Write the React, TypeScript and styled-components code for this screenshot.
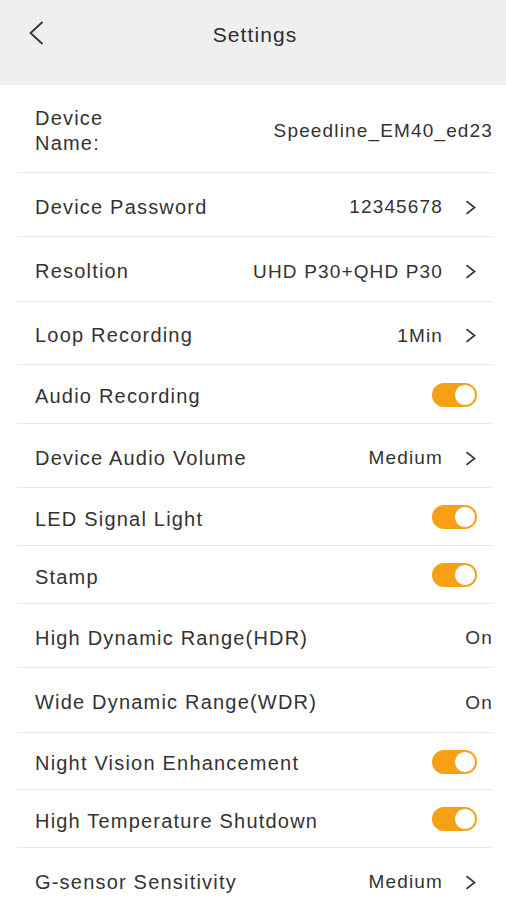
import React from "react";
import styled, { createGlobalStyle } from "styled-components";

const Global = createGlobalStyle`
  html, body { margin: 0; padding: 0; background: #ffffff; }
  body { font-family: "Liberation Sans", Arial, sans-serif; color: #333333; }
`;

const Page = styled.div`
  width: 506px;
  display: flex;
  flex-direction: column;
  background: #ffffff;
`;

const Header = styled.header`
  height: 85px;
  background: #efefef;
  display: grid;
  grid-template-columns: 80px 1fr 80px;
  align-items: start;
`;

const BackButton = styled.button`
  border: none;
  background: none;
  padding: 21px 0 0 28px;
  margin: 0;
  justify-self: start;
  display: flex;
  cursor: pointer;
`;

const Title = styled.h1`
  margin: 0;
  padding-top: 21px;
  padding-left: 4px;
  text-align: center;
  font-size: 21px;
  font-weight: 400;
  letter-spacing: 1.1px;
  line-height: 28px;
  color: #2e2e2e;
`;

const List = styled.div`
  display: flex;
  flex-direction: column;
`;

const Row = styled.div<{ $h: number }>`
  min-height: ${(p) => p.$h}px;
  box-sizing: border-box;
  display: flex;
  align-items: center;
  padding: 4px 13px 0 35px;
  position: relative;
  &:not(:last-child)::after {
    content: "";
    position: absolute;
    left: 17px;
    right: 13px;
    bottom: 0;
    height: 1px;
    background: #e8e8e8;
  }
`;

const Label = styled.div<{ $max?: number }>`
  flex: 1 1 auto;
  font-size: 20px;
  letter-spacing: 1.2px;
  line-height: 25px;
  color: #333333;
  max-width: ${(p) => (p.$max ? `${p.$max}px` : "none")};
`;

const Value = styled.div`
  margin-left: auto;
  font-size: 19px;
  letter-spacing: 1.15px;
  white-space: nowrap;
  color: #333333;
`;

const Chevron = styled.svg`
  margin: 0 17px 0 22px;
  flex: none;
`;

const Toggle = styled.div<{ $on: boolean }>`
  margin: -4px 16px 0 auto;
  width: 45px;
  height: 24px;
  box-sizing: border-box;
  border-radius: 12px;
  background: ${(p) => (p.$on ? "#f8a013" : "#dddddd")};
  display: flex;
  align-items: center;
  justify-content: ${(p) => (p.$on ? "flex-end" : "flex-start")};
  padding: 0 1px;
`;

const Knob = styled.div`
  width: 22px;
  height: 22px;
  box-sizing: border-box;
  border-radius: 50%;
  background: #ffffff;
  border: 1px solid #e9a23a;
`;

type Item =
  | { kind: "nav"; label: string; value: string; h: number }
  | { kind: "text"; label: string; value: string; h: number; max?: number }
  | { kind: "toggle"; label: string; on: boolean; h: number };

const items: Item[] = [
  { kind: "text", label: "Device Name:", value: "Speedline_EM40_ed23", h: 88, max: 100 },
  { kind: "nav", label: "Device Password", value: "12345678", h: 64 },
  { kind: "nav", label: "Resoltion", value: "UHD P30+QHD P30", h: 65 },
  { kind: "nav", label: "Loop Recording", value: "1Min", h: 63 },
  { kind: "toggle", label: "Audio Recording", on: true, h: 59 },
  { kind: "nav", label: "Device Audio Volume", value: "Medium", h: 64 },
  { kind: "toggle", label: "LED Signal Light", on: true, h: 58 },
  { kind: "toggle", label: "Stamp", on: true, h: 58 },
  { kind: "text", label: "High Dynamic Range(HDR)", value: "On", h: 64 },
  { kind: "text", label: "Wide Dynamic Range(WDR)", value: "On", h: 65 },
  { kind: "toggle", label: "Night Vision Enhancement", on: true, h: 57 },
  { kind: "toggle", label: "High Temperature Shutdown", on: true, h: 58 },
  { kind: "nav", label: "G-sensor Sensitivity", value: "Medium", h: 64 },
];

const ChevronRight = () => (
  <Chevron width="11" height="15" viewBox="0 0 11 15">
    <polyline points="1.5,1.2 9.5,7.5 1.5,13.8" fill="none" stroke="#333" strokeWidth="1.7" strokeLinejoin="miter" />
  </Chevron>
);

export default function App() {
  return (
    <Page>
      <Global />
      <Header>
        <BackButton aria-label="Back">
          <svg width="16" height="24" viewBox="0 0 16 24">
            <polyline points="14.5,1 2.5,12 14.5,23" fill="none" stroke="#333" strokeWidth="1.8" />
          </svg>
        </BackButton>
        <Title>Settings</Title>
        <div />
      </Header>
      <List>
        {items.map((it) => (
          <Row key={it.label} $h={it.h}>
            <Label $max={it.kind === "text" ? it.max : undefined}>{it.label}</Label>
            {it.kind === "nav" && (
              <>
                <Value>{it.value}</Value>
                <ChevronRight />
              </>
            )}
            {it.kind === "text" && <Value>{it.value}</Value>}
            {it.kind === "toggle" && (
              <Toggle $on={it.on}>
                <Knob />
              </Toggle>
            )}
          </Row>
        ))}
      </List>
    </Page>
  );
}
